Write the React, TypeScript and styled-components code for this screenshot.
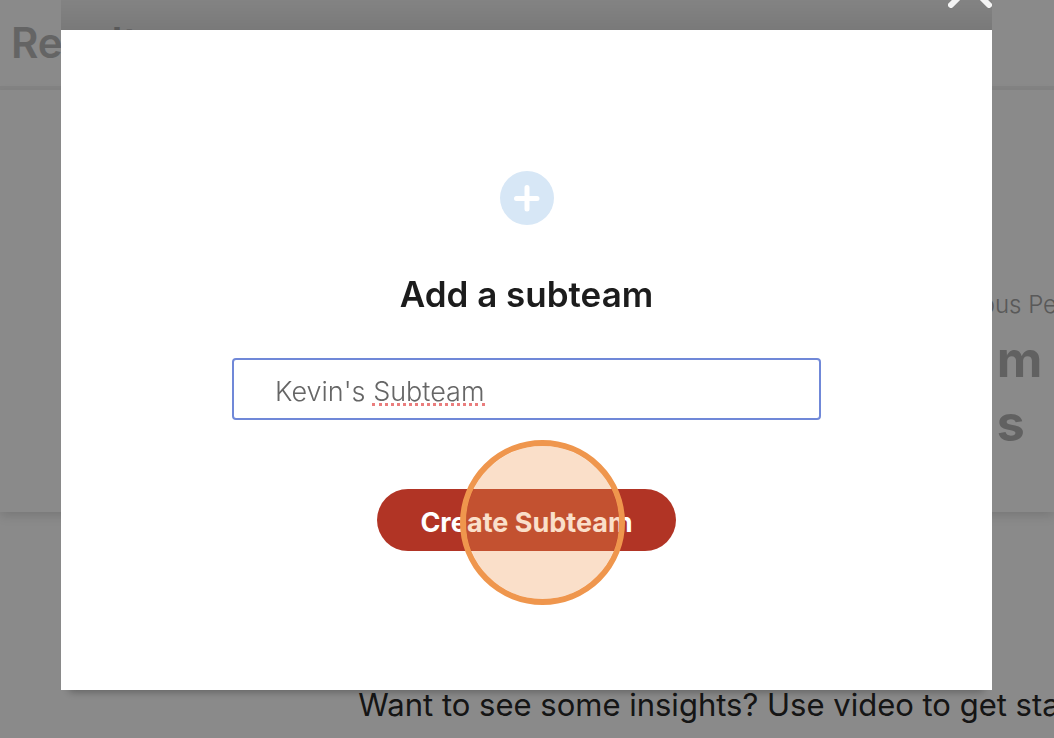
import React, { useState } from "react";
import styled, { createGlobalStyle } from "styled-components";

const GlobalStyle = createGlobalStyle`
  *, *::before, *::after { box-sizing: border-box; }
  body {
    margin: 0;
    background: #fff;
    font-family: Inter, "Liberation Sans", sans-serif;
    overflow: hidden;
  }
`;

const Page = styled.div`
  position: relative;
  min-height: 100vh;
  overflow: hidden;
  white-space: nowrap;
`;

const Header = styled.header`
  padding: 16px 11px;
  border-bottom: 4px solid #f2f2f2;
`;

const PageTitle = styled.h1`
  margin: 0;
  font-size: 42px;
  line-height: 54px;
  font-weight: 600;
  color: #bababa;
`;

const StatsPanel = styled.section`
  display: flex;
  padding: 195px 0 57px 87%;
  box-shadow: 0 4px 10px #dedede;
`;

const Stat = styled.div`
  display: flex;
  flex-direction: column;
  flex-shrink: 0;
  gap: 2px;
  padding-left: 8px;
`;

const StatLabel = styled.span`
  font-size: 24px;
  line-height: 40px;
  font-weight: 300;
  color: #a4a4a4;
`;

const StatValue = styled.strong`
  padding-left: 34px;
  font-size: 50px;
  line-height: 64px;
  font-weight: 700;
  color: #b4b4b4;
`;

const StatUnit = styled.span`
  margin-left: 4px;
`;

const Prompt = styled.p`
  margin: 0;
  padding: 177px 0 16px 34%;
  font-size: 31px;
  line-height: 32px;
  font-weight: 400;
  color: #282828;
`;

const Overlay = styled.div`
  position: fixed;
  inset: 0;
  padding: 0 62px 0 61px;
  background: rgba(0, 0, 0, 0.46);
`;

const Frame = styled.div`
  position: relative;
  padding-top: 30px;
  background: linear-gradient(rgba(0, 0, 0, 0.05), rgba(0, 0, 0, 0.12) 30px, transparent 30px);
`;

const CloseButton = styled.button`
  position: absolute;
  top: -36px;
  right: 0;
  padding: 0;
  border: 0;
  background: none;
  line-height: 0;
`;

const Dialog = styled.div`
  display: flex;
  flex-direction: column;
  align-items: center;
  padding: 141px 40px 139px;
  background: #fff;
  box-shadow: 0 10px 8px -8px rgba(0, 0, 0, 0.3);
`;

const DialogTitle = styled.h2`
  margin: 47px 0 42px;
  font-size: 35px;
  line-height: 44px;
  font-weight: 600;
  color: #1c1c1c;
`;

const Form = styled.form`
  display: flex;
  flex-direction: column;
  align-items: center;
  gap: 69px;
  width: 100%;
`;

const Field = styled.label`
  position: relative;
  display: block;
  width: 100%;
  max-width: 589px;
`;

const NameInput = styled.input`
  display: block;
  width: 100%;
  height: 62px;
  padding: 4px 41px 0;
  border: 2px solid #7088d8;
  border-radius: 4px;
  outline: 0;
  background: #fff;
  font-family: inherit;
  font-size: 27px;
  font-weight: 300;
  color: #666;
`;

const SpellingMark = styled.span`
  position: absolute;
  left: 140px;
  bottom: 14px;
  width: 113px;
  border-bottom: 3px dotted #ea7d7d;
  pointer-events: none;
`;

const ButtonArea = styled.div`
  position: relative;
`;

const SubmitButton = styled.button`
  display: block;
  height: 62px;
  min-width: 299px;
  padding: 4px 40px 0;
  border: 0;
  border-radius: 31px;
  background: #b13425;
  font-family: inherit;
  font-size: 27px;
  font-weight: 700;
  color: #fff;
`;

const ClickHighlight = styled.span`
  position: absolute;
  top: -49px;
  left: 83px;
  width: 165px;
  height: 165px;
  border: 6px solid #ef964d;
  border-radius: 50%;
  background: rgba(239, 150, 77, 0.3);
  background-clip: padding-box;
  pointer-events: none;
`;

export default function App() {
  const [name, setName] = useState("Kevin's Subteam");

  return (
    <>
      <GlobalStyle />
      <Page>
        <Header>
          <PageTitle>Results</PageTitle>
        </Header>
        <StatsPanel>
          <Stat>
            <StatLabel>Previous Period</StatLabel>
            <StatValue>
              0<StatUnit>m</StatUnit>
              <br />
              0<StatUnit>s</StatUnit>
            </StatValue>
          </Stat>
        </StatsPanel>
        <Prompt>Want to see some insights? Use video to get started</Prompt>
      </Page>
      <Overlay>
        <Frame>
          <CloseButton type="button" aria-label="Close">
            <svg width="44" height="44" viewBox="0 0 44 44" fill="none" stroke="#f4f4f4" strokeWidth="6" strokeLinecap="round">
              <path d="M3 3 41 41M41 3 3 41" />
            </svg>
          </CloseButton>
          <Dialog role="dialog" aria-modal="true" aria-labelledby="dialog-title">
            <svg width="54" height="54" viewBox="0 0 54 54" fill="none" aria-hidden="true">
              <circle cx="27" cy="27" r="27" fill="#d7e7f6" />
              <path d="M27 16.5V38M16.5 27.5H37" stroke="#fff" strokeWidth="5" strokeLinecap="round" />
            </svg>
            <DialogTitle id="dialog-title">Add a subteam</DialogTitle>
            <Form onSubmit={(event) => event.preventDefault()}>
              <Field>
                <NameInput
                  type="text"
                  aria-label="Subteam name"
                  value={name}
                  spellCheck={false}
                  onChange={(event) => setName(event.target.value)}
                />
                <SpellingMark />
              </Field>
              <ButtonArea>
                <SubmitButton type="submit">Create Subteam</SubmitButton>
                <ClickHighlight />
              </ButtonArea>
            </Form>
          </Dialog>
        </Frame>
      </Overlay>
    </>
  );
}
